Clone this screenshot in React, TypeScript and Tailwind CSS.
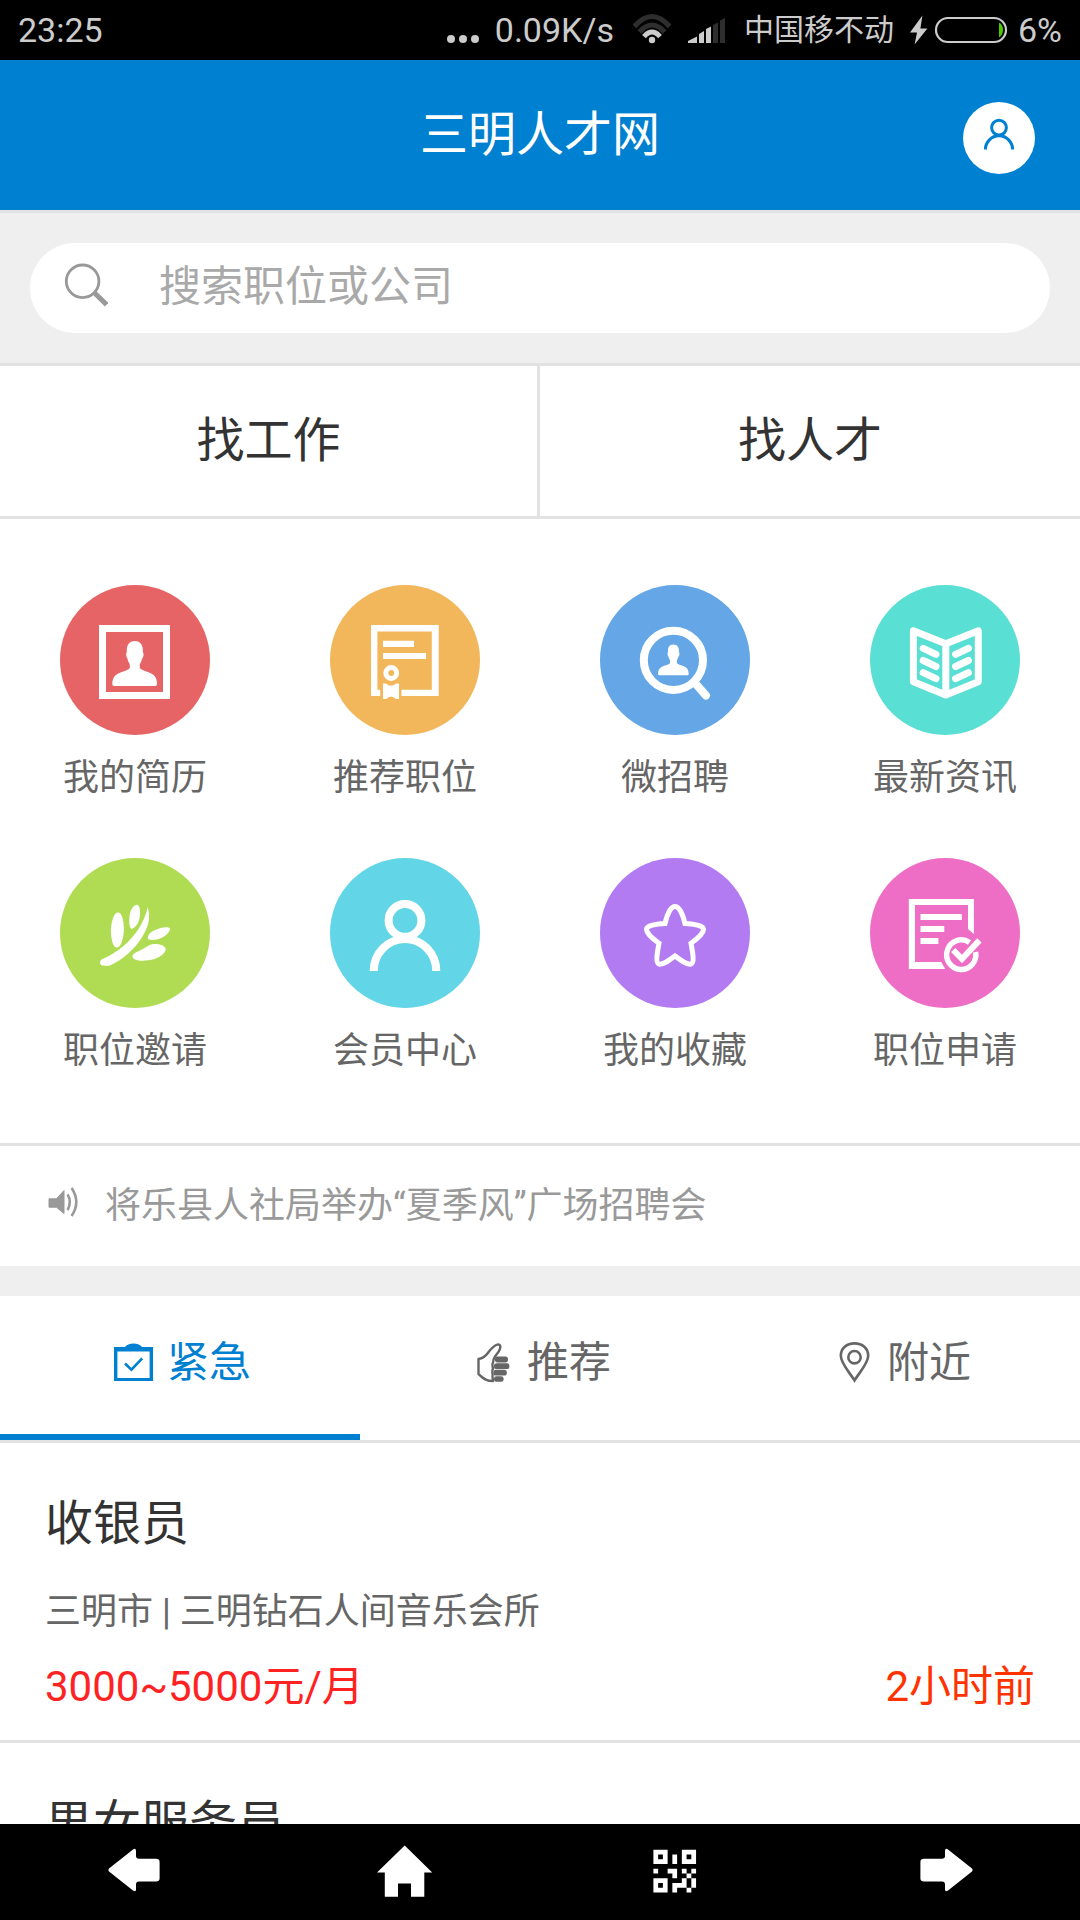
import React, { useState } from 'react';
import clsx from 'clsx';

interface Shortcut {
  label: string;
  color: string;
  icon: React.ReactNode;
}

interface Job {
  title: string;
  company?: string;
  salary?: string;
  time?: string;
}

const PERSON_PATH =
  'M74.8 56C69 56 66.4 60 66.8 67C65.6 69 66.2 72 67.6 74C68 77 69.8 78 69.8 80V83C67.8 85.8 61 86.6 57.4 89C53 91.6 52.3 96 52.3 99Q52.3 101 54.2 101H95.2Q97 101 97 99C97 96 96.4 91.6 92.2 89C88.6 86.6 82 85.8 79.8 83V80C79.8 78 81.6 77 82 74C83.6 72 84.2 69 82.9 67C83.2 60 80.6 56 74.8 56Z';

const shortcuts: Shortcut[] = [
  {
    label: '我的简历',
    color: 'bg-[#e66465]',
    icon: (
      <>
        <rect x="42.5" y="43.5" width="64" height="67" fill="none" stroke="#fff" strokeWidth="7" />
        <path d={PERSON_PATH} />
      </>
    )
  },
  {
    label: '推荐职位',
    color: 'bg-[#f2b75b]',
    icon: (
      <>
        <path d="M41 40H108.7V111H71.5V104.7H101.8V46.4H47.4V104.7H50.2V111H41Z" />
        <path d="M53 55.7H84V62H53ZM53 68H96V74H53Z" />
        <circle cx="61.2" cy="88" r="5.4" fill="none" stroke="#fff" strokeWidth="5" />
        <path d="M53 98.4H56Q61 103 66 98.4H69V114H66Q61 109 56 114H53Z" />
      </>
    )
  },
  {
    label: '微招聘',
    color: 'bg-[#64a6e6]',
    icon: (
      <>
        <circle cx="73.4" cy="75.3" r="29.6" fill="none" stroke="#fff" strokeWidth="8" />
        <path d="M95 98L106 110.5" stroke="#fff" strokeWidth="8" strokeLinecap="round" />
        <path d={PERSON_PATH} transform="translate(22.2 21.1) scale(.685)" />
      </>
    )
  },
  {
    label: '最新资讯',
    color: 'bg-[#5adfd4]',
    icon: (
      <g fill="none" stroke="#fff" strokeWidth="7" strokeLinecap="round" strokeLinejoin="round">
        <path d="M43.4 45.8L75.8 58.8L108.3 45.8V96.8L75.8 110L43.4 96.8ZM75.8 58.8V110" />
        <path d="M53.2 63.3L66 69.3M53.2 75.5L66 81.5M53.2 87.7L66 93.7M98.4 63.3L85.6 69.3M98.4 75.5L85.6 81.5M98.4 87.7L85.6 93.7" />
      </g>
    )
  },
  {
    label: '职位邀请',
    color: 'bg-[#b0dc54]',
    icon: (
      <>
        <ellipse cx="57.4" cy="72" rx="6.5" ry="17.4" transform="rotate(2 57.4 72)" />
        <path d="M76.8 46.7C81 47 80.6 58 79 62.5C77.5 66.5 74.5 70 71.8 71C69 69.5 69 63 69.6 58C70.4 51 74 47 76.8 46.7Z" />
        <path d="M87.7 49.3C86 57 83 64 78.5 71C70.5 83 59 94 41.5 101.5C39.6 103 39.6 106 41.2 107C44 108.2 48 108 50 107.6C63 101.5 75 91 82.5 78.5C89 68 90.6 59 87.7 49.3Z" />
        <path d="M88 81C87 77 91 73.5 96.5 71.5C102 69.3 107.5 68.6 110 70.3C110.5 73.5 106 78 101.5 80C96.5 82.2 91 82.6 88 81Z" />
        <path d="M72.4 98.8C72.2 95.5 76 94.5 80 92.5C85 90 89.5 86.4 93.5 86C99 85.5 105 87.5 105.8 91C105.4 96 98 100.2 92.5 101.6C85 103.4 73.5 103.6 72.4 98.8Z" />
      </>
    )
  },
  {
    label: '会员中心',
    color: 'bg-[#62d5e6]',
    icon: (
      <g fill="none" stroke="#fff" strokeWidth="8">
        <circle cx="75" cy="62.4" r="16.4" />
        <path d="M43.7 113A31.3 32 0 0 1 106.3 113" />
      </g>
    )
  },
  {
    label: '我的收藏',
    color: 'bg-[#b37bf2]',
    icon: (
      <path
        d="M75 48.5C79.5 48.5 83 57 85 65.6C93 66 103.6 67.5 103.5 71.4C103.4 75.6 97 81 91 85.2C92.6 94 94.8 104.6 91 106C87 107.2 80.5 102.2 75 98C69.5 102.2 63 107.2 59 106C55.2 104.6 57.4 94 59 85.2C53 81 46.6 75.6 46.5 71.4C46.4 67.5 57 66 65 65.6C67 57 70.5 48.5 75 48.5Z"
        fill="none"
        stroke="#fff"
        strokeWidth="5"
      />
    )
  },
  {
    label: '职位申请',
    color: 'bg-[#ef6ec5]',
    icon: (
      <>
        <path d="M38.8 41H103.9V76L98 71V47H45V104H71.2L75.3 111H38.8Z" />
        <path d="M50.5 56H91.8V62H50.5ZM50.5 68H74.3V74H50.5ZM50.5 80H68.4V86H50.5Z" />
        <g fill="none" stroke="#fff">
          <path d="M99.5 84.5A14.6 14.8 0 1 0 105.6 94" strokeWidth="5.4" />
          <path d="M83.2 92L92 101L109.4 82.4" strokeWidth="6" />
        </g>
      </>
    )
  }
];

const tabs = [
  {
    label: '紧急',
    icon: (
      <>
        <path d="M5 8H16Q18.5 4.4 24.5 4.4T33 8H44V42H5ZM8.4 12.4V39H40.6V12.4Z" fillRule="evenodd" fill="currentColor" />
        <path d="M16 24.5L22.4 30.6L33.2 19.4" fill="none" stroke="currentColor" strokeWidth="2.6" />
      </>
    )
  },
  {
    label: '推荐',
    icon: (
      <>
        <path
          d="M24 42C18 42 15.5 40.5 9.5 35V20C13.5 19.5 17 17 20 12.5C23 9 25.5 5.6 29.5 5.4C33 6.5 31 11.5 27.5 15.5C25.5 18 24 20 24.2 23C22.4 25.5 23.8 28 24 29.5C21.8 33 24.4 35 23.5 37.5C23.5 39 24 40.5 24 42Z"
          fill="none"
          stroke="currentColor"
          strokeWidth="2.4"
          strokeLinejoin="round"
        />
        <g fill="currentColor">
          <rect x="26" y="17.6" width="13" height="5.8" rx="2.6" />
          <rect x="25" y="24.2" width="15.4" height="5.8" rx="2.6" />
          <rect x="24.4" y="30.8" width="13.4" height="5.8" rx="2.6" />
          <rect x="25" y="37.2" width="9.6" height="5.6" rx="2.4" />
        </g>
      </>
    )
  },
  {
    label: '附近',
    icon: (
      <g fill="none" stroke="currentColor" strokeWidth="2.6">
        <path d="M25.5 41.4C21 34 11.8 24.5 11.8 16.8C11.8 9.4 17.6 4.4 25.5 4.4S39.2 9.4 39.2 16.8C39.2 24.5 30 34 25.5 41.4Z" />
        <circle cx="25.5" cy="18.2" r="6.2" />
      </g>
    )
  }
];

const jobs: Job[] = [
  {
    title: '收银员',
    company: '三明市 | 三明钻石人间音乐会所',
    salary: '3000~5000元/月',
    time: '2小时前'
  },
  { title: '男女服务员' }
];

const navItems = [
  {
    label: '后退',
    icon: <path d="M4 31.5Q2.6 30 4 28.5L28 9.4Q31 7.8 31 11V16Q31 18.8 34 18.8H51Q54.6 18.8 54.6 22V38.6Q54.6 41.6 51 41.6H34Q31 41.6 31 44.5V49.5Q31 52.4 28 50.6Z" />
  },
  {
    label: '首页',
    icon: <path d="M29.7 5.6L57.2 32.6H49.3V56.8H36V43.6H23V56.8H9.8V32.6H2Z" />
  },
  {
    label: '二维码',
    icon: (
      <g transform="translate(8.4 9.8) scale(4.74)">
        <path
          d="M0 0H3V3H0ZM1 1V2H2V1ZM6 0H9V3H6ZM7 1V2H8V1ZM0 6H3V9H0ZM1 7V8H2V7Z"
          fillRule="evenodd"
        />
        <path d="M4 1H5V3H4ZM0 4H1V5H0ZM3 4H5V6H4V5H3ZM6 4H7V5H6ZM8 4H9V5H8ZM7 5H8V6H7ZM6 6H7V8H5V9H4V7H6ZM8 6H9V8H8ZM7 8H8V9H7Z" />
      </g>
    )
  },
  {
    label: '前进',
    icon: <path d="M57 31.5Q58.4 30 57 28.5L33 9.4Q30 7.8 30 11V16Q30 18.8 27 18.8H9Q5.4 18.8 5.4 22V38.6Q5.4 41.6 9 41.6H27Q30 41.6 30 44.5V49.5Q30 52.4 33 50.6Z" />
  }
];

const StatusBar: React.FC = () => (
  <div className="flex items-center justify-between bg-black py-2 px-[18px] text-[34px] leading-[44px] text-[#cccccc]">
    <span>23:25</span>
    <div className="flex items-center">
      <svg width="32" height="44" viewBox="0 0 32 44" fill="currentColor">
        <circle cx="4" cy="31" r="4" />
        <circle cx="16" cy="31" r="4" />
        <circle cx="28" cy="31" r="4" />
      </svg>
      <span className="ml-4">0.09K/s</span>
      <svg className="ml-[18px]" width="40" height="44" viewBox="0 0 40 44" fill="none">
        <g stroke="#2e2e2e" strokeWidth="5">
          <path d="M2.4 18.5Q20 -1.5 37.6 18.5" />
          <path d="M7.4 24Q20 10 32.6 24" />
        </g>
        <path d="M12 28.6Q20 19.4 28 28.6" stroke="currentColor" strokeWidth="5" />
        <circle cx="20" cy="32" r="3.2" fill="currentColor" />
      </svg>
      <svg className="ml-4" width="38" height="44" viewBox="0 0 38 44">
        <path d="M0 35V33L9 28.6V35ZM11 35V26L16 23V35ZM18 35V21L23 18.6V35Z" fill="currentColor" />
        <path d="M25 35V17L30 14.6V35ZM32 35V12.6L37 10V35Z" fill="#2e2e2e" />
      </svg>
      <span className="ml-[18px] text-[30px]">中国移不动</span>
      <svg className="ml-4" width="18" height="44" viewBox="0 0 18 44" fill="currentColor">
        <path d="M12.4 7.4L0 24.6H7L4.6 36.6L17.4 20.6H10.4Z" />
      </svg>
      <svg className="ml-1.5" width="74" height="44" viewBox="0 0 74 44">
        <rect x="2" y="10" width="70" height="24" rx="12" fill="none" stroke="currentColor" strokeWidth="2.2" />
        <path d="M65 14.6Q69 17 69 22T65 29.4Z" fill="#4ac800" />
      </svg>
      <span className="ml-[10px]">6%</span>
    </div>
  </div>
);

const JobItem: React.FC<{ job: Job }> = ({ job }) => (
  <li className="border-b-3 border-[#e2e2e2] px-[45px] pt-[49px] pb-[25px]">
    <h2 className="text-[48px] leading-[64px] text-[#333333]">{job.title}</h2>
    {job.company && <p className="mt-8 text-[36px] leading-[48px] text-[#666666]">{job.company}</p>}
    {job.salary && (
      <div className="mt-[23px] flex justify-between text-[42px] leading-[56px]">
        <span className="text-[#ff2222]">{job.salary}</span>
        <span className="text-[#ff3300]">{job.time}</span>
      </div>
    )}
  </li>
);

export default function App() {
  const [activeTab, setActiveTab] = useState(0);
  const [keyword, setKeyword] = useState('');

  return (
    <div
      lang="zh-CN"
      className="flex h-screen flex-col overflow-hidden bg-white font-[Roboto,'Noto_Sans_CJK_SC',sans-serif]"
    >
      <StatusBar />

      <main className="min-h-0 flex-1 overflow-hidden">
        {/* Header */}
        <header className="grid grid-cols-[1fr_auto_1fr] items-start bg-[#0080d1] px-[45px] pt-[42px] pb-9">
          <h1 className="col-start-2 text-[48px] leading-[66px] text-white">三明人才网</h1>
          <a href="#me" aria-label="会员中心" className="justify-self-end rounded-full bg-white text-[#0080d1]">
            <svg width="72" height="72" viewBox="0 0 72 72" fill="none" stroke="currentColor" strokeWidth="3">
              <circle cx="36" cy="25.6" r="7.4" />
              <path d="M22.4 47.6A13.6 13.8 0 0 1 49.6 47.6" />
            </svg>
          </a>
        </header>

        {/* Search */}
        <form
          className="border-y-3 border-[#e2e2e2] bg-[#efefef] p-[30px]"
          onSubmit={(e) => e.preventDefault()}
        >
          <div className="flex items-center gap-[51px] rounded-full bg-white px-[30px] py-[15px]">
            <label htmlFor="keyword" aria-label="搜索" className="shrink-0 text-[#999999]">
              <svg width="48" height="60" viewBox="0 0 48 60" fill="none" stroke="currentColor">
                <circle cx="22.6" cy="23.3" r="16.3" strokeWidth="2.8" />
                <path d="M33.6 34L46.6 46.6" strokeWidth="5" />
              </svg>
            </label>
            <input
              id="keyword"
              type="search"
              value={keyword}
              onChange={(e) => setKeyword(e.target.value)}
              placeholder="搜索职位或公司"
              className="h-[60px] min-w-0 flex-1 pb-1 text-[42px] text-[#333333] placeholder:text-[#a9a9a9] focus:outline-none"
            />
          </div>
        </form>

        {/* Jobs / talents */}
        <nav className="grid grid-cols-2 border-b-3 border-[#e2e2e2] text-center text-[48px] leading-[64px] text-[#333333]">
          <a href="#jobs" className="border-r-3 border-[#e2e2e2] py-[43px]">找工作</a>
          <a href="#talents" className="py-[43px]">找人才</a>
        </nav>

        {/* Shortcuts */}
        <div className="grid grid-cols-4 gap-y-[49px] border-b-3 border-[#e2e2e2] pt-[66px] pb-[61px]">
          {shortcuts.map((item) => (
            <a key={item.label} href="#shortcut" className="flex flex-col items-center gap-3">
              <span className={clsx('rounded-full', item.color)}>
                <svg width="150" height="150" viewBox="0 0 150 150" fill="#fff">
                  {item.icon}
                </svg>
              </span>
              <span className="text-[36px] leading-[62px] text-[#666666]">{item.label}</span>
            </a>
          ))}
        </div>

        {/* Notice */}
        <a href="#notice" className="flex items-center gap-6 px-[45px] py-[35px] text-[36px] leading-[50px] text-[#999999]">
          <svg className="shrink-0" width="36" height="48" viewBox="0 0 36 48">
            <path d="M4 16.8H11.4L19 8.6V31.6L11.4 25.2H4Z" fill="currentColor" stroke="currentColor" />
            <path d="M22.6 12.4Q27 20 22.6 28M26.6 6Q36 20 26.6 34" fill="none" stroke="currentColor" strokeWidth="2.6" />
          </svg>
          <span>将乐县人社局举办“夏季风”广场招聘会</span>
        </a>

        {/* Job list tabs */}
        <div role="tablist" className="grid grid-cols-3 border-t-30 border-b-3 border-t-[#efefef] border-b-[#e2e2e2]">
          {tabs.map((tab, i) => (
            <button
              key={tab.label}
              type="button"
              role="tab"
              aria-selected={i === activeTab}
              onClick={() => setActiveTab(i)}
              className={clsx(
                'flex items-center justify-center gap-[10px] border-b-6 pt-[42px] pb-[46px] text-[42px] leading-[50px]',
                i === activeTab ? 'border-[#0080d1] text-[#0080d1]' : 'border-transparent text-[#666666]'
              )}
            >
              <svg width="48" height="48" viewBox="0 0 48 48">{tab.icon}</svg>
              {tab.label}
            </button>
          ))}
        </div>

        <ul>
          {jobs.map((job) => (
            <JobItem key={job.title} job={job} />
          ))}
        </ul>
      </main>

      {/* Bottom navigation */}
      <nav className="grid grid-cols-4 bg-black pt-4 pb-5 text-white">
        {navItems.map((item) => (
          <button key={item.label} type="button" aria-label={item.label} className="flex justify-center">
            <svg width="60" height="60" viewBox="0 0 60 60" fill="currentColor">
              {item.icon}
            </svg>
          </button>
        ))}
      </nav>
    </div>
  );
}
